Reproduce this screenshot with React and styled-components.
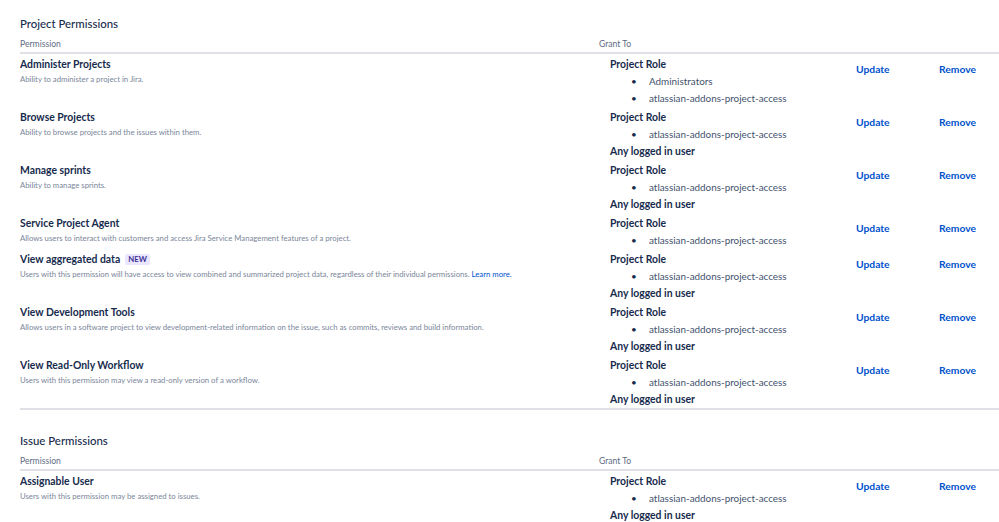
import React from "react";
import styled, { createGlobalStyle } from "styled-components";

const Global = createGlobalStyle`
  html, body { margin: 0; padding: 0; background: #fff; overflow: hidden; }
  body { font-family: "Segoe UI", Lato, "Open Sans", sans-serif; color: #172B4D; }
  * { box-sizing: border-box; }
`;

const Page = styled.div`
  padding: 14px 0 0 20px;
  width: 999px;
  display: flex;
  flex-direction: column;
  gap: 21px;
`;

const Section = styled.section`
  display: flex;
  flex-direction: column;
`;

const SectionTitle = styled.h2`
  margin: 0;
  font-size: 11.4px;
  line-height: 20px;
  font-weight: 500;
  color: #172B4D;
`;

const Grid = styled.div`
  display: grid;
  grid-template-columns: 579px 257px 83px 1fr;
`;

const HeadRow = styled(Grid)`
  margin-top: 3px;
  padding-bottom: 1px;
  border-bottom: 2px solid #DFE1E6;
`;

const HeadCell = styled.div`
  font-size: 8.6px;
  line-height: 14px;
  color: #5E6C84;
`;

const Body = styled.div`
  border-bottom: ${(p) => (p.$closed ? "2px solid #DFE1E6" : "none")};
`;

const Row = styled(Grid)`
  padding-top: 2px;
  font-size: 10px;
`;

const PermCell = styled.div`
  display: flex;
  flex-direction: column;
`;

const PermName = styled.div`
  font-size: 10.4px;
  line-height: 17px;
  font-weight: 700;
  color: #172B4D;
  display: flex;
  align-items: center;
  gap: 5px;
`;

const Badge = styled.span`
  font-size: 7.8px;
  line-height: 11px;
  font-weight: 700;
  color: #403294;
  background: #EAE6FF;
  border-radius: 2px;
  padding: 0 3px;
  text-transform: uppercase;
`;

const PermDesc = styled.div`
  font-size: 7.75px;
  line-height: 12px;
  margin-top: 0;
  color: #7A869A;
`;

const Link = styled.a`
  color: #0052CC;
  text-decoration: none;
`;

const GrantCell = styled.div`
  padding-left: 11px;
  display: flex;
  flex-direction: column;
`;

const GrantLabel = styled.div`
  font-size: 10.4px;
  line-height: 17px;
  font-weight: 700;
  color: #172B4D;
`;

const GrantList = styled.ul`
  margin: 0;
  padding: 0 0 0 20px;
  list-style: none;
`;

const GrantItem = styled.li`
  font-size: 9.9px;
  line-height: 17px;
  color: #42526E;
  display: flex;
  &::before {
    content: "•";
    display: inline-block;
    width: 18px;
    padding-left: 1px;
    color: #172B4D;
  }
`;

const ActionCell = styled.div`
  padding-top: 5px;
  font-size: 10.3px;
  line-height: 17px;
`;

const Action = styled.a`
  display: block;
  font-size: 10.3px;
  line-height: 17px;
  font-weight: 700;
  color: #0052CC;
  text-decoration: none;
  cursor: pointer;
`;

const ROLE = "atlassian-addons-project-access";
const std = [
  { label: "Project Role", items: [ROLE] },
  { label: "Any logged in user", items: [] },
];

const sections = [
  {
    title: "Project Permissions",
    rows: [
      {
        name: "Administer Projects",
        desc: "Ability to administer a project in Jira.",
        grants: [{ label: "Project Role", items: ["Administrators", ROLE] }],
      },
      {
        name: "Browse Projects",
        desc: "Ability to browse projects and the issues within them.",
        grants: std,
      },
      { name: "Manage sprints", desc: "Ability to manage sprints.", grants: std },
      {
        name: "Service Project Agent",
        desc: "Allows users to interact with customers and access Jira Service Management features of a project.",
        grants: [{ label: "Project Role", items: [ROLE] }],
      },
      {
        name: "View aggregated data",
        badge: "New",
        desc: "Users with this permission will have access to view combined and summarized project data, regardless of their individual permissions.",
        link: "Learn more.",
        grants: std,
      },
      {
        name: "View Development Tools",
        desc: "Allows users in a software project to view development-related information on the issue, such as commits, reviews and build information.",
        grants: std,
      },
      {
        name: "View Read-Only Workflow",
        desc: "Users with this permission may view a read-only version of a workflow.",
        grants: std,
      },
    ],
    closed: true,
  },
  {
    title: "Issue Permissions",
    rows: [
      {
        name: "Assignable User",
        desc: "Users with this permission may be assigned to issues.",
        grants: std,
      },
    ],
  },
];

export default function App() {
  return (
    <>
      <Global />
      <Page>
        {sections.map((s) => (
          <Section key={s.title}>
            <SectionTitle>{s.title}</SectionTitle>
            <HeadRow>
              <HeadCell>Permission</HeadCell>
              <HeadCell>Grant To</HeadCell>
              <HeadCell />
              <HeadCell />
            </HeadRow>
            <Body $closed={s.closed}>
              {s.rows.map((r) => (
                <Row key={r.name}>
                  <PermCell>
                    <PermName>
                      {r.name}
                      {r.badge && <Badge>{r.badge}</Badge>}
                    </PermName>
                    <PermDesc>
                      {r.desc}
                      {r.link && (
                        <>
                          {" "}
                          <Link href="#">{r.link}</Link>
                        </>
                      )}
                    </PermDesc>
                  </PermCell>
                  <GrantCell>
                    {r.grants.map((g) => (
                      <div key={g.label}>
                        <GrantLabel>{g.label}</GrantLabel>
                        {g.items.length > 0 && (
                          <GrantList>
                            {g.items.map((it) => (
                              <GrantItem key={it}>{it}</GrantItem>
                            ))}
                          </GrantList>
                        )}
                      </div>
                    ))}
                  </GrantCell>
                  <ActionCell>
                    <Action>Update</Action>
                  </ActionCell>
                  <ActionCell>
                    <Action>Remove</Action>
                  </ActionCell>
                </Row>
              ))}
            </Body>
          </Section>
        ))}
      </Page>
    </>
  );
}
